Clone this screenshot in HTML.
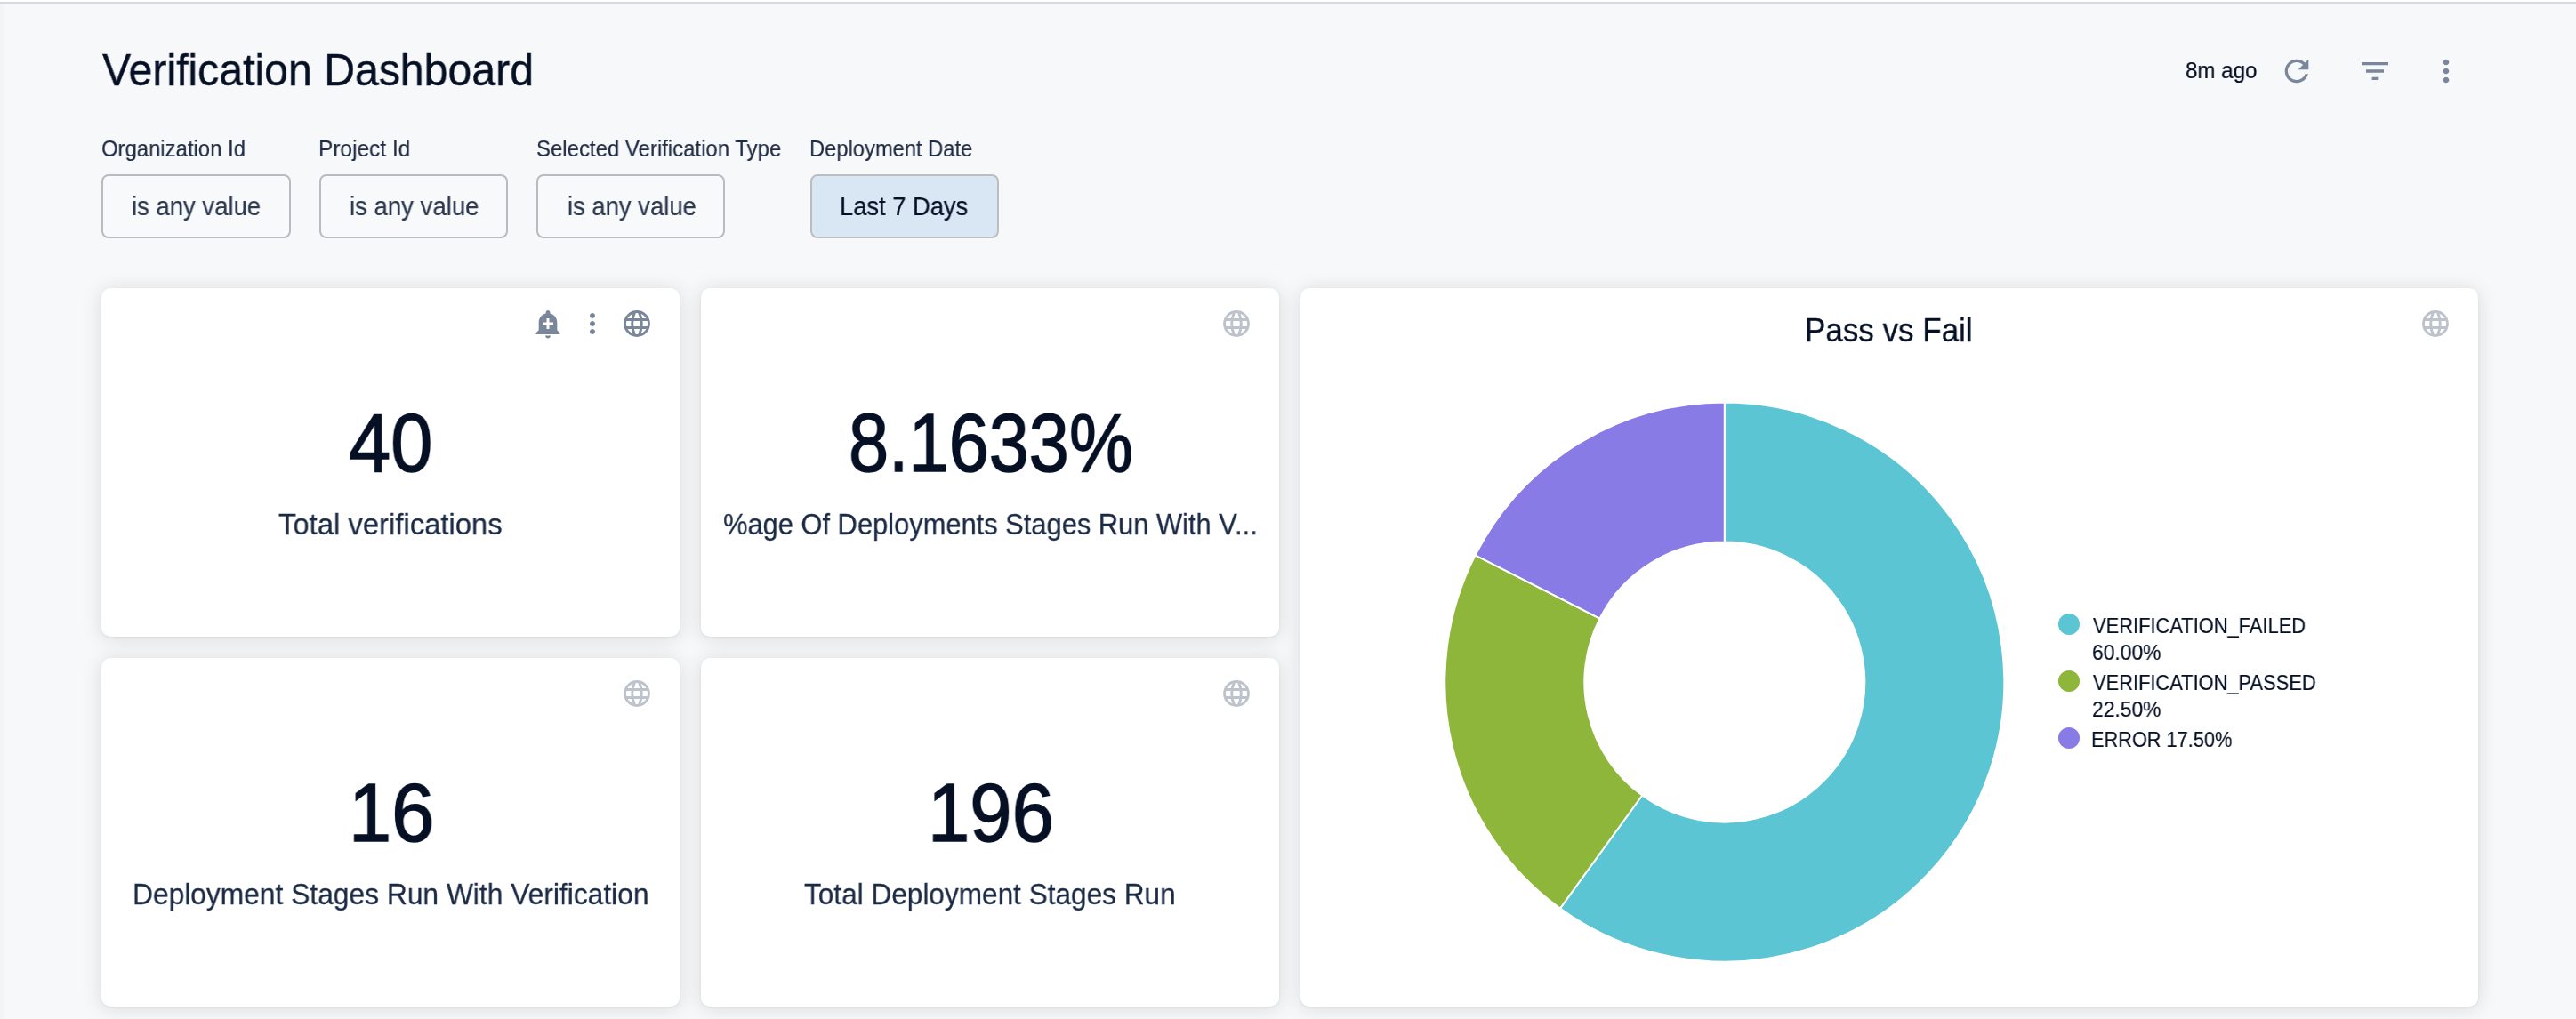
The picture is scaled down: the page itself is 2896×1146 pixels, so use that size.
<!DOCTYPE html>
<html><head><meta charset="utf-8"><title>Verification Dashboard</title>
<style>
html,body{margin:0;padding:0;}
body{width:2896px;height:1146px;overflow:hidden;position:relative;background:#f7f8fa;font-family:"Liberation Sans",sans-serif;}
.t{position:absolute;white-space:nowrap;line-height:1;transform-origin:0 0;will-change:transform;}
.ic{position:absolute;overflow:visible;}
.topbar{position:absolute;left:0;top:0;width:2896px;height:2px;background:#fff;}
.topline{position:absolute;left:0;top:2px;width:2896px;height:2px;background:#d8d9e2;}
.lshade{position:absolute;left:0;top:4px;width:8px;height:1142px;background:linear-gradient(to right,#f2f3f5,#f7f8fa);}
.card{position:absolute;background:#fff;border-radius:10px;box-shadow:0 1px 3px rgba(0,0,0,0.07),0 2px 22px rgba(20,20,0,0.13);}
.btn{position:absolute;box-sizing:border-box;height:72px;top:196px;border:2px solid #b9bbbe;border-radius:8px;background:#f8f9fb;}
</style></head><body>
<div class="topbar"></div><div class="topline"></div><div class="lshade"></div>
<div class="btn" style="left:114px;width:213px"></div>
<div class="btn" style="left:359px;width:212px"></div>
<div class="btn" style="left:603px;width:212px"></div>
<div class="btn" style="left:911px;width:212px;background:#d9e6f3;border-color:#bdbdbd"></div>
<div class="card" style="left:114px;top:324px;width:650px;height:392px"></div>
<div class="card" style="left:788px;top:324px;width:650px;height:392px"></div>
<div class="card" style="left:114px;top:740px;width:650px;height:392px"></div>
<div class="card" style="left:788px;top:740px;width:650px;height:392px"></div>
<div class="card" style="left:1462px;top:324px;width:1324px;height:808px"></div>
<svg class="ic" style="left:0;top:0" width="2896" height="1146"><path fill="#5cc5d3" stroke="#fff" stroke-width="2" stroke-linejoin="round" d="M1938.80 452.60A314.5 314.5 0 1 1 1753.94 1021.54L1846.22 894.52A157.5 157.5 0 1 0 1938.80 609.60Z"/><path fill="#8db63b" stroke="#fff" stroke-width="2" stroke-linejoin="round" d="M1753.94 1021.54A314.5 314.5 0 0 1 1658.58 624.32L1798.47 695.60A157.5 157.5 0 0 0 1846.22 894.52Z"/><path fill="#897be5" stroke="#fff" stroke-width="2" stroke-linejoin="round" d="M1658.58 624.32A314.5 314.5 0 0 1 1938.80 452.60L1938.80 609.60A157.5 157.5 0 0 0 1798.47 695.60Z"/><circle cx="2326" cy="702" r="12" fill="#5cc5d3"/><circle cx="2326" cy="766" r="12" fill="#8db63b"/><circle cx="2326" cy="830" r="12" fill="#897be5"/></svg>
<svg class="ic" style="left:2562px;top:60px" width="40" height="40" viewBox="0 0 24 24"><path fill="#7a869a" d="M17.65 6.35C16.2 4.9 14.21 4 12 4c-4.42 0-7.99 3.58-7.99 8s3.57 8 7.99 8c3.73 0 6.84-2.55 7.73-6h-2.08c-.82 2.33-3.04 4-5.65 4-3.31 0-6-2.69-6-6s2.69-6 6-6c1.66 0 3.14.69 4.22 1.78L13 11h7V4l-2.35 2.35z"/></svg>
<svg class="ic" style="left:2650px;top:60px" width="40" height="40" viewBox="0 0 24 24"><path fill="#7a869a" d="M10 18h4v-2h-4v2zM3 6v2h18V6H3zm3 7h12v-2H6v2z"/></svg>
<svg class="ic" style="left:2730px;top:60px" width="40" height="40" viewBox="0 0 24 24"><path fill="#7a869a" d="M12 8c1.1 0 2-.9 2-2s-.9-2-2-2-2 .9-2 2 .9 2 2 2zm0 2c-1.1 0-2 .9-2 2s.9 2 2 2 2-.9 2-2-.9-2-2-2zm0 6c-1.1 0-2 .9-2 2s.9 2 2 2 2-.9 2-2-.9-2-2-2z"/></svg>
<svg class="ic" style="left:597.5px;top:346px" width="36" height="36" viewBox="0 0 24 24"><path fill="#7a869a" d="M10.01 21.01c0 1.1.89 1.99 1.99 1.99s1.99-.89 1.99-1.99h-3.98zm8.87-4.19V11c0-3.25-2.25-5.97-5.29-6.69v-.72C13.59 2.71 12.88 2 12 2s-1.59.71-1.59 1.59v.72C7.37 5.03 5.12 7.75 5.12 11v5.82L3 18.94V20h18v-1.06l-2.12-2.12zM16 13.01h-3v3h-2v-3H8V11h3V8h2v3h3v2.01z"/></svg>
<svg class="ic" style="left:648px;top:346px" width="36" height="36" viewBox="0 0 24 24"><path fill="#7a869a" d="M12 8c1.1 0 2-.9 2-2s-.9-2-2-2-2 .9-2 2 .9 2 2 2zm0 2c-1.1 0-2 .9-2 2s.9 2 2 2 2-.9 2-2-.9-2-2-2zm0 6c-1.1 0-2 .9-2 2s.9 2 2 2 2-.9 2-2-.9-2-2-2z"/></svg>
<svg class="ic" style="left:698px;top:346px" width="36" height="36" viewBox="698 346 36 36"><g fill="none" stroke="#7a869a" stroke-width="2.9"><circle cx="716" cy="364" r="13.45"/><path d="M703.33 359.50H728.67M703.33 368.50H728.67"/><path d="M718.40 350.80A32.7 32.7 0 0 1 718.40 377.20M713.60 350.80A32.7 32.7 0 0 0 713.60 377.20"/></g></svg>
<svg class="ic" style="left:1372px;top:346px" width="36" height="36" viewBox="1372 346 36 36"><g fill="none" stroke="#bdc3cd" stroke-width="2.9"><circle cx="1390" cy="364" r="13.45"/><path d="M1377.33 359.50H1402.67M1377.33 368.50H1402.67"/><path d="M1392.40 350.80A32.7 32.7 0 0 1 1392.40 377.20M1387.60 350.80A32.7 32.7 0 0 0 1387.60 377.20"/></g></svg>
<svg class="ic" style="left:698px;top:762px" width="36" height="36" viewBox="698 762 36 36"><g fill="none" stroke="#bdc3cd" stroke-width="2.9"><circle cx="716" cy="780" r="13.45"/><path d="M703.33 775.50H728.67M703.33 784.50H728.67"/><path d="M718.40 766.80A32.7 32.7 0 0 1 718.40 793.20M713.60 766.80A32.7 32.7 0 0 0 713.60 793.20"/></g></svg>
<svg class="ic" style="left:1372px;top:762px" width="36" height="36" viewBox="1372 762 36 36"><g fill="none" stroke="#bdc3cd" stroke-width="2.9"><circle cx="1390" cy="780" r="13.45"/><path d="M1377.33 775.50H1402.67M1377.33 784.50H1402.67"/><path d="M1392.40 766.80A32.7 32.7 0 0 1 1392.40 793.20M1387.60 766.80A32.7 32.7 0 0 0 1387.60 793.20"/></g></svg>
<svg class="ic" style="left:2720px;top:346px" width="36" height="36" viewBox="2720 346 36 36"><g fill="none" stroke="#bdc3cd" stroke-width="2.9"><circle cx="2738" cy="364" r="13.45"/><path d="M2725.33 359.50H2750.67M2725.33 368.50H2750.67"/><path d="M2740.40 350.80A32.7 32.7 0 0 1 2740.40 377.20M2735.60 350.80A32.7 32.7 0 0 0 2735.60 377.20"/></g></svg>
<div class="t" style="left:114.69px;top:54.20px;font-size:50.29px;color:#061025;-webkit-text-stroke:0.40px #061025;transform:scaleX(0.9586);">Verification Dashboard</div>
<div class="t" style="left:2456.98px;top:65.99px;font-size:26.29px;color:#061025;-webkit-text-stroke:0.21px #061025;transform:scaleX(0.9182);">8m ago</div>
<div class="t" style="left:114.17px;top:155.30px;font-size:25.86px;color:#1f2b42;-webkit-text-stroke:0.21px #1f2b42;transform:scaleX(0.9238);">Organization Id</div>
<div class="t" style="left:357.51px;top:155.30px;font-size:25.86px;color:#1f2b42;-webkit-text-stroke:0.21px #1f2b42;transform:scaleX(0.9457);">Project Id</div>
<div class="t" style="left:603.05px;top:155.40px;font-size:25.43px;color:#1f2b42;-webkit-text-stroke:0.20px #1f2b42;transform:scaleX(0.9424);">Selected Verification Type</div>
<div class="t" style="left:910.13px;top:155.40px;font-size:25.43px;color:#1f2b42;-webkit-text-stroke:0.20px #1f2b42;transform:scaleX(0.9333);">Deployment Date</div>
<div class="t" style="left:147.55px;top:217.99px;font-size:28.59px;color:#2b384d;-webkit-text-stroke:0.23px #2b384d;transform:scaleX(0.9615);">is any value</div>
<div class="t" style="left:392.65px;top:217.99px;font-size:28.59px;color:#2b384d;-webkit-text-stroke:0.23px #2b384d;transform:scaleX(0.9635);">is any value</div>
<div class="t" style="left:637.75px;top:217.99px;font-size:28.59px;color:#2b384d;-webkit-text-stroke:0.23px #2b384d;transform:scaleX(0.9595);">is any value</div>
<div class="t" style="left:944.40px;top:218.19px;font-size:28.59px;color:#061025;-webkit-text-stroke:0.23px #061025;transform:scaleX(0.9561);">Last 7 Days</div>
<div class="t" style="left:392.24px;top:453.26px;font-size:92.19px;color:#061025;-webkit-text-stroke:1.48px #061025;transform:scaleX(0.9205);">40</div>
<div class="t" style="left:313.13px;top:572.97px;font-size:33.48px;color:#1b2a44;-webkit-text-stroke:0.27px #1b2a44;transform:scaleX(0.9804);">Total verifications</div>
<div class="t" style="left:953.65px;top:452.26px;font-size:92.76px;color:#061025;-webkit-text-stroke:1.48px #061025;transform:scaleX(0.8736);">8.1633%</div>
<div class="t" style="left:812.71px;top:573.27px;font-size:33.62px;color:#1b2a44;-webkit-text-stroke:0.27px #1b2a44;transform:scaleX(0.9179);">%age Of Deployments Stages Run With V...</div>
<div class="t" style="left:392.03px;top:869.17px;font-size:91.76px;color:#061025;-webkit-text-stroke:1.47px #061025;transform:scaleX(0.9434);">16</div>
<div class="t" style="left:148.54px;top:988.87px;font-size:33.62px;color:#1b2a44;-webkit-text-stroke:0.27px #1b2a44;transform:scaleX(0.9444);">Deployment Stages Run With Verification</div>
<div class="t" style="left:1042.63px;top:868.26px;font-size:92.33px;color:#061025;-webkit-text-stroke:1.48px #061025;transform:scaleX(0.9210);">196</div>
<div class="t" style="left:904.33px;top:989.17px;font-size:33.48px;color:#1b2a44;-webkit-text-stroke:0.27px #1b2a44;transform:scaleX(0.9431);">Total Deployment Stages Run</div>
<div class="t" style="left:2029.28px;top:353.65px;font-size:36.78px;color:#061025;-webkit-text-stroke:0.29px #061025;transform:scaleX(0.9519);">Pass vs Fail</div>
<div class="t" style="left:2352.79px;top:692.10px;font-size:24.71px;color:#061025;-webkit-text-stroke:0.20px #061025;transform:scaleX(0.8856);">VERIFICATION_FAILED</div>
<div class="t" style="left:2351.84px;top:721.70px;font-size:24.14px;color:#061025;-webkit-text-stroke:0.19px #061025;transform:scaleX(0.9471);">60.00%</div>
<div class="t" style="left:2352.79px;top:756.20px;font-size:24.71px;color:#061025;-webkit-text-stroke:0.20px #061025;transform:scaleX(0.8847);">VERIFICATION_PASSED</div>
<div class="t" style="left:2351.84px;top:785.70px;font-size:24.14px;color:#061025;-webkit-text-stroke:0.19px #061025;transform:scaleX(0.9471);">22.50%</div>
<div class="t" style="left:2351.03px;top:819.80px;font-size:24.71px;color:#061025;-webkit-text-stroke:0.20px #061025;transform:scaleX(0.8799);">ERROR 17.50%</div>
</body></html>
